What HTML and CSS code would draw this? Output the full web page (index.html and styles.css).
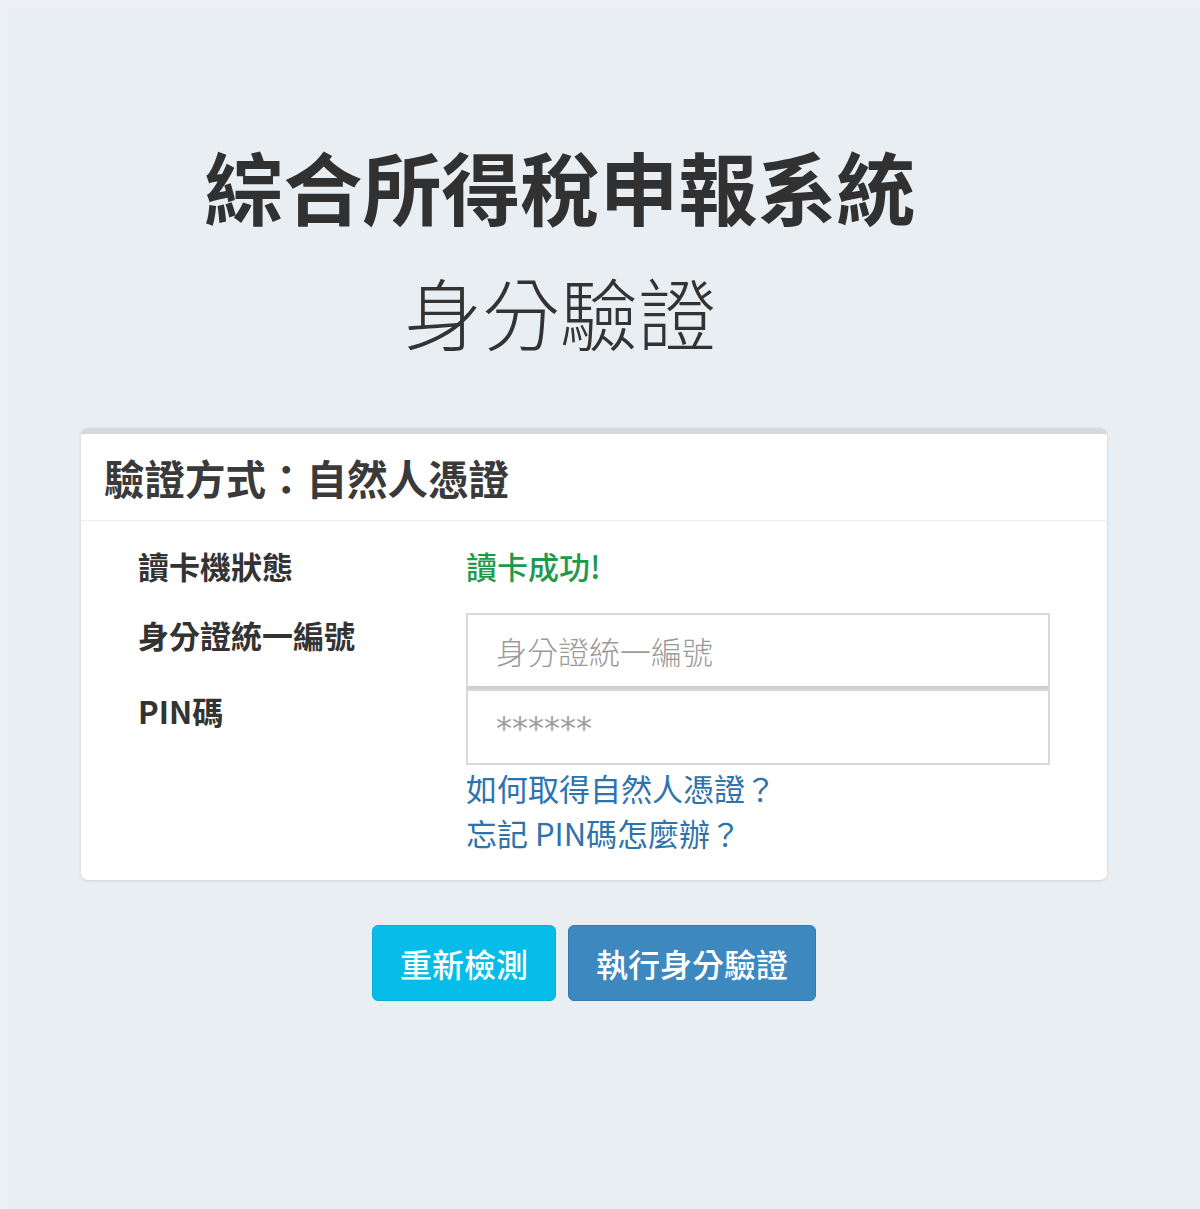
FILE: index.html
```html
<!DOCTYPE html>
<html lang="zh-Hant">
<head>
<meta charset="utf-8">
<title>綜合所得稅申報系統 身分驗證</title>
<link rel="stylesheet" href="styles.css">
</head>
<body>
<div class="page">
  <header class="hero">
    <h1 class="title">綜合所得稅申報系統</h1>
    <h2 class="subtitle">身分驗證</h2>
  </header>

  <section class="card">
    <div class="card-head">驗證方式：自然人憑證</div>
    <div class="card-body">
      <div class="label">讀卡機狀態</div>
      <div class="status">讀卡成功!</div>

      <div class="label label-field">身分證統一編號</div>
      <div class="field"><input class="input input-top" type="text" placeholder="身分證統一編號"></div>

      <div class="label label-field">PIN碼</div>
      <div class="field">
        <input class="input input-pin" type="password" placeholder="******">
        <a class="link" href="#">如何取得自然人憑證？</a>
        <a class="link" href="#">忘記 PIN碼怎麼辦？</a>
      </div>
    </div>
  </section>

  <div class="actions">
    <button class="btn btn-info" type="button">重新檢測</button>
    <button class="btn btn-primary" type="button">執行身分驗證</button>
  </div>
</div>
</body>
</html>
```

FILE: styles.css
```css
html {
  background: #edf1f5;
}
body {
  margin: 8px 0 0 8px;
  background: #e9eef2;
  min-height: 1201px;
  font-family: "Noto Sans CJK TC", "Noto Sans", "Liberation Sans", sans-serif;
  color: #333;
}
.page {
  padding: 0 93px 40px 73px;
}
.hero {
  padding-top: 128px;
  text-align: center;
  padding-right: 68px;
}
.title {
  margin: 0;
  font-size: 79px;
  line-height: 100px;
  font-weight: 700;
  color: #313131;
}
.subtitle {
  margin: 25px 0 0 0;
  font-size: 78px;
  line-height: 100px;
  font-weight: 200;
  color: #333;
  padding-right: 0;
}
.card {
  margin-top: 67px;
  background: #fff;
  border-top: 6px solid #d4d9df;
  border-radius: 7px;
  box-shadow: 0 1px 3px rgba(0, 0, 0, 0.12);
}
.card-head {
  height: 86px;
  display: flex;
  align-items: center;
  padding-left: 23px;
  font-size: 40.5px;
  font-weight: 700;
  color: #3a3a3a;
  border-bottom: 1px solid #ebeef0;
}
.card-body {
  display: grid;
  grid-template-columns: 328px 1fr;
  padding: 27px 57px 25px 57px;
}
.label {
  font-size: 31px;
  line-height: 36px;
  font-weight: 700;
  color: #333;
}
.label-field {
  padding-top: 4px;
}
.status {
  font-size: 31px;
  line-height: 36px;
  font-weight: 500;
  color: #1e9a4c;
  margin-bottom: 29px;
}
.field {
  display: flex;
  flex-direction: column;
  align-items: flex-start;
}
.input {
  box-sizing: border-box;
  width: 100%;
  height: 76px;
  margin: 0;
  border: 2px solid #d7dadd;
  border-radius: 0;
  padding: 0 28px;
  font-family: inherit;
  font-size: 31px;
  color: #555;
  background: #fff;
  outline: none;
}
.input-top {
  border-bottom: 3px solid #cbd0d5;
}
.input::placeholder {
  color: #9a9a9a;
  font-weight: 300;
}
.input-pin {
  font-family: "DejaVu Sans", "Liberation Sans", sans-serif;
  font-size: 32px;
  padding-top: 2px;
}
.input-pin::placeholder {
  color: #9d9d9d;
  font-weight: 400;
}
.link {
  font-size: 31px;
  line-height: 45px;
  color: #2d73ad;
  text-decoration: none;
}
.actions {
  display: flex;
  justify-content: center;
  gap: 12px;
  margin-top: 45px;
  padding-left: 0;
}
.btn {
  height: 76px;
  padding: 0 27px;
  border-radius: 6px;
  font-family: inherit;
  font-size: 32px;
  font-weight: 500;
  color: #fff;
  cursor: pointer;
}
.btn-info {
  background: #05bde8;
  border: 1px solid #04b0d9;
}
.btn-primary {
  background: #3d88bf;
  border: 1px solid #357ab0;
}
```
